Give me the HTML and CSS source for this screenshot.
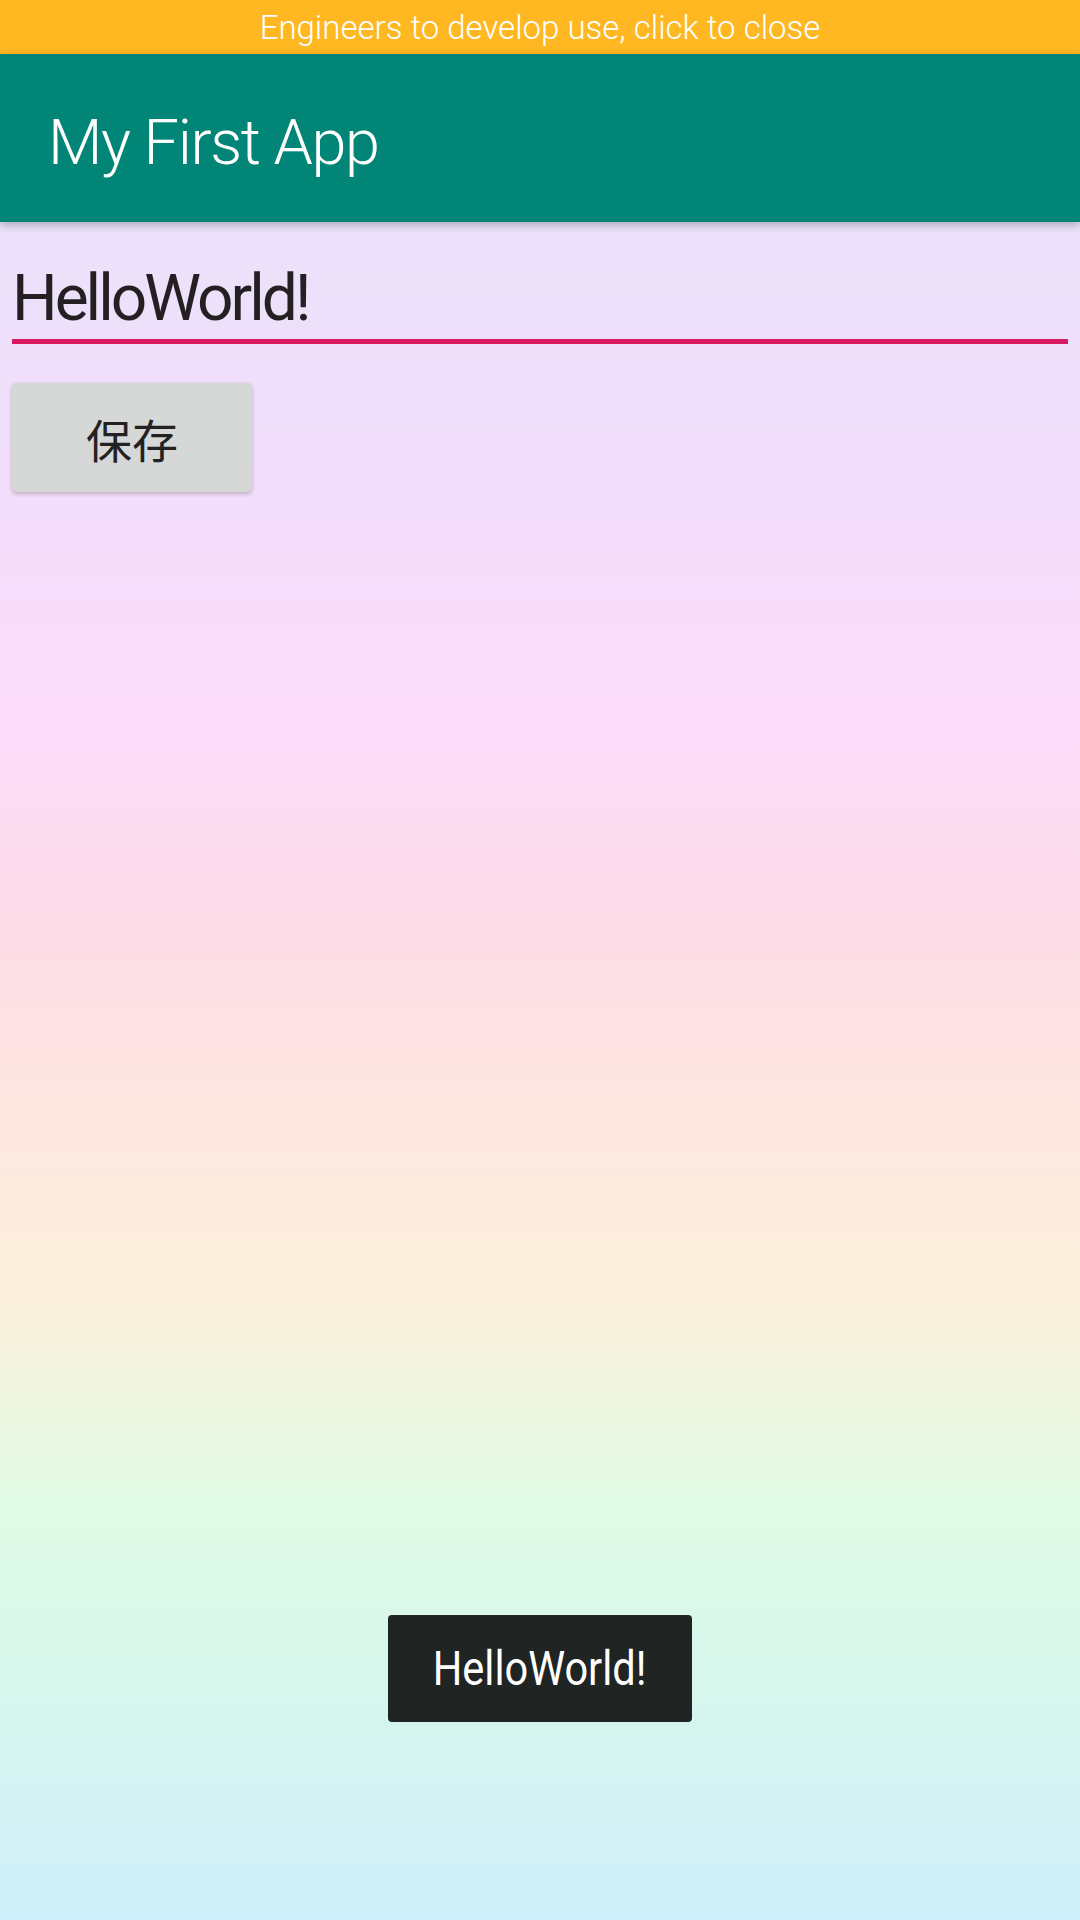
FILE: index.html
```html
<!DOCTYPE html>
<html lang="zh">
<head>
<meta charset="utf-8">
<title>My First App</title>
<link rel="stylesheet" href="styles.css">
</head>
<body>
<div class="screen">
  <div class="banner">Engineers to develop use, click to close</div>
  <header class="appbar"><h1 class="title">My First App</h1></header>
  <main class="content">
    <div class="edit"><span class="edit-text">HelloWorld!</span></div>
    <button class="btn">保存</button>
  </main>
  <div class="toast"><span class="toast-text">HelloWorld!</span></div>
</div>
</body>
</html>
```
FILE: styles.css
```css
html, body {
  margin: 0;
  padding: 0;
}
body {
  width: 1080px;
  height: 1920px;
  overflow: hidden;
  font-family: Roboto, "Noto Sans CJK SC", sans-serif;
}
.screen {
  position: relative;
  width: 1080px;
  height: 1920px;
  display: flex;
  flex-direction: column;
  background: linear-gradient(to bottom,
    #ebe1fa 0px,
    #ebe1fa 230px,
    #f3defb 500px,
    #fcdcfb 720px,
    #fddce8 920px,
    #fde6e0 1100px,
    #fcf0dc 1300px,
    #e0fae4 1500px,
    #d6f7ee 1700px,
    #cfeffb 1920px);
}
.banner {
  height: 54px;
  background: #ffb822;
  color: #fff;
  font-size: 33px;
  font-weight: 300;
  letter-spacing: 0;
  line-height: 56px;
  text-align: center;
}
.appbar {
  height: 168px;
  background: #008577;
  display: flex;
  align-items: center;
  padding-left: 48px;
  box-shadow: 0 3px 8px rgba(0, 0, 0, 0.25);
  position: relative;
  z-index: 1;
}
.title {
  margin: 0;
  color: #fff;
  font-size: 63px;
  font-weight: 300;
  letter-spacing: -1.4px;
  line-height: 1;
  padding-top: 8px;
}
.content {
  padding: 0 12px;
  display: flex;
  flex-direction: column;
  align-items: flex-start;
}
.edit {
  align-self: stretch;
  height: 122px;
  border-bottom: 5px solid #d81b60;
  box-sizing: border-box;
  display: flex;
  align-items: flex-end;
  padding-bottom: 4px;
}
.edit-text {
  color: #231f22;
  font-size: 64px;
  font-weight: 400;
  letter-spacing: -3px;
  line-height: 1;
  padding-bottom: 4px;
}
.btn {
  margin-top: 39px;
  width: 240px;
  height: 109px;
  border: none;
  border-radius: 5px;
  background: #d6d7d7;
  color: #222;
  font-family: "Noto Sans CJK SC", sans-serif;
  font-size: 46px;
  box-shadow: 0 2px 4px rgba(0, 0, 0, 0.22);
  padding: 0;
}
.toast {
  position: absolute;
  left: 388px;
  top: 1615px;
  width: 304px;
  height: 107px;
  background: #202423;
  border-radius: 4px;
  display: flex;
  align-items: center;
  justify-content: center;
}
.toast-text {
  color: #fff;
  font-size: 48px;
  display: inline-block;
  transform: scaleX(0.865);
  line-height: 1;
}
```
